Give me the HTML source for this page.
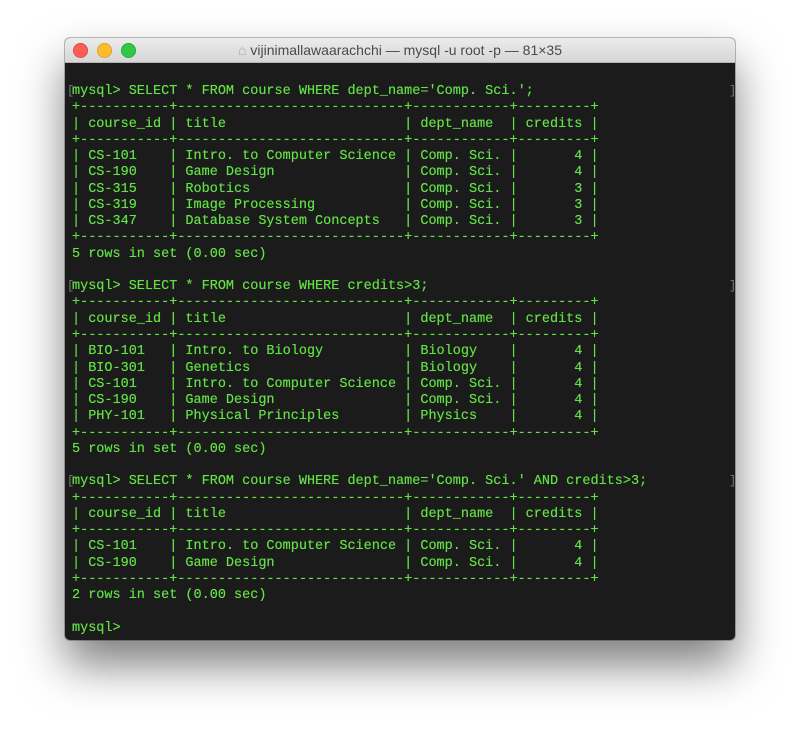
<!DOCTYPE html>
<html><head><meta charset="utf-8"><style>
html,body{margin:0;padding:0;width:800px;height:733px;background:#fff;overflow:hidden}
.win{position:absolute;left:65px;top:38px;width:670px;height:602px;background:#1b1b1b;border-radius:5px;box-shadow:0 25px 45px rgba(0,0,0,.5),0 0 0 1px rgba(0,0,0,.25);overflow:hidden}
.tb{height:24px;background:linear-gradient(#ececec,#d6d6d6);border-bottom:1px solid #b5b5b5;position:relative;font:14px "Liberation Sans",sans-serif;color:#4a4a4a;text-align:center;line-height:24px}
.d{position:absolute;top:5px;width:13px;height:13px;border-radius:50%}
pre{position:absolute;left:7px;top:46px;margin:0;font:13.5px/16.27px "Liberation Mono",monospace;color:#62e046;text-shadow:0 0 0.4px #62e046}
.b{position:absolute;color:#777;font:12px "Liberation Mono",monospace}
</style></head><body>
<div class="win">
<div class="tb">
<div class="d" style="left:8px;background:#fc5f57;border:0.5px solid #de4a41"></div>
<div class="d" style="left:32px;background:#fdbc2e;border:0.5px solid #dea123"></div>
<div class="d" style="left:56px;background:#33c748;border:0.5px solid #27aa35"></div>
<span style="color:#b99">&#8962;</span> vijinimallawaarachchi — mysql -u root -p — 81×35
</div>
<pre>mysql&gt; SELECT * FROM course WHERE dept_name='Comp. Sci.';
+-----------+----------------------------+------------+---------+
| course_id | title                      | dept_name  | credits |
+-----------+----------------------------+------------+---------+
| CS-101    | Intro. to Computer Science | Comp. Sci. |       4 |
| CS-190    | Game Design                | Comp. Sci. |       4 |
| CS-315    | Robotics                   | Comp. Sci. |       3 |
| CS-319    | Image Processing           | Comp. Sci. |       3 |
| CS-347    | Database System Concepts   | Comp. Sci. |       3 |
+-----------+----------------------------+------------+---------+
5 rows in set (0.00 sec)

mysql&gt; SELECT * FROM course WHERE credits&gt;3;
+-----------+----------------------------+------------+---------+
| course_id | title                      | dept_name  | credits |
+-----------+----------------------------+------------+---------+
| BIO-101   | Intro. to Biology          | Biology    |       4 |
| BIO-301   | Genetics                   | Biology    |       4 |
| CS-101    | Intro. to Computer Science | Comp. Sci. |       4 |
| CS-190    | Game Design                | Comp. Sci. |       4 |
| PHY-101   | Physical Principles        | Physics    |       4 |
+-----------+----------------------------+------------+---------+
5 rows in set (0.00 sec)

mysql&gt; SELECT * FROM course WHERE dept_name='Comp. Sci.' AND credits&gt;3;
+-----------+----------------------------+------------+---------+
| course_id | title                      | dept_name  | credits |
+-----------+----------------------------+------------+---------+
| CS-101    | Intro. to Computer Science | Comp. Sci. |       4 |
| CS-190    | Game Design                | Comp. Sci. |       4 |
+-----------+----------------------------+------------+---------+
2 rows in set (0.00 sec)

mysql&gt;</pre>
<div class="b" style="left:2px;top:46px">[</div><div class="b" style="left:664px;top:46px">]</div>
<div class="b" style="left:2px;top:241px">[</div><div class="b" style="left:664px;top:241px">]</div>
<div class="b" style="left:2px;top:436px">[</div><div class="b" style="left:664px;top:436px">]</div>
</div>
</body></html>
